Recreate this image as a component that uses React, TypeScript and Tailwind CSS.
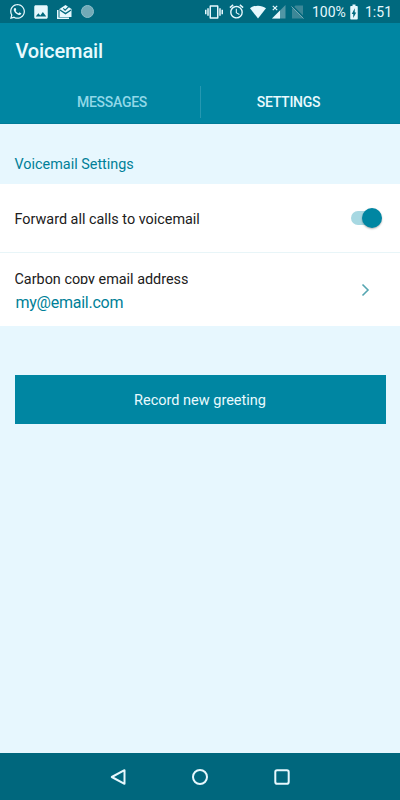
import React from 'react';
import { FaWhatsapp } from 'react-icons/fa';
import { MdAlarm, MdBatteryChargingFull, MdImage, MdVibration } from 'react-icons/md';

const StatusBar = () => (
    <div className="flex h-[23px] shrink-0 items-center bg-[#00697e] text-[#e6f8fd]">
        <FaWhatsapp className="ml-[9px] size-[17px]" />
        <MdImage className="ml-[6px] size-[18px]" />
        {/* Inbox with a checked letter */}
        <svg className="ml-[7px] h-[14px] w-[15px]" viewBox="0 0 15 14">
            <path d="M0 5h1.5v7.5H12V14H0z" fill="currentColor" />
            <path d="M2.5 4 8.5 0l6 4v8h-12z" fill="currentColor" />
            <path d="m3 5 5.5 3.6L14 5" fill="none" stroke="#00697e" strokeWidth="1.3" />
            <path d="m6.3 3.4 1.8 1.8L12 1.4" fill="none" stroke="#00697e" strokeWidth="1.2" />
        </svg>
        <div className="ml-[9px] size-[13px] rounded-full border border-[#8dbfca] bg-[#72aab7]" />

        <MdVibration className="ml-auto size-[18px]" />
        <MdAlarm className="ml-[5px] size-[17px]" />
        <svg className="ml-[4px] h-[14px] w-[18px]" viewBox="0 0 18 14" fill="currentColor">
            <path d="M1 3.2C5.5 -.2 12.5 -.2 17 3.2L9 13.5z" />
        </svg>
        <svg className="ml-[5px] h-[14px] w-[14px]" viewBox="0 0 14 14">
            <path d="M13.5 0v13.5H0z" fill="#5196a5" />
            <path d="M8 5.5v8H0z" fill="currentColor" />
            <path d="M0 0h6.5v6H0z" fill="#00697e" />
            <path d="m.8 .8 4.4 4.4m0-4.4L.8 5.2" stroke="currentColor" strokeWidth="1.2" />
        </svg>
        {/* Empty SIM slot */}
        <svg className="ml-[5px] h-[14px] w-[13px]" viewBox="0 0 13 14">
            <path d="M4.5.5H12v13H1V4z" fill="#3b8797" />
            <path d="m1.5 1 12 12" stroke="#00697e" strokeWidth="1.4" />
            <path d="m.5 1.5 12 12" stroke="#74aab6" />
        </svg>
        <span className="ml-[8px] w-[34px] whitespace-nowrap pt-px text-[14px] leading-none">100%</span>
        <MdBatteryChargingFull className="ml-[-1px] mr-[-1px] size-[18px]" />
        <span className="ml-[3px] w-[35px] pt-px text-[14px] leading-none">1:51</span>
    </div>
);

const Header = () => (
    <header className="h-[101px] shrink-0 border-b border-[#007c97] bg-[#0086a2]">
        <h1 className="ml-[15.5px] h-[56px] text-[20px] font-medium leading-[56px] tracking-[-0.1px] text-[#e9fafe]">Voicemail</h1>
        <div className="flex items-center pt-[6px] text-center text-[14px] font-medium tracking-[-0.25px]">
            <div className="w-[200px] pl-[24px] pt-px leading-[32px] text-[#91d8e8]">MESSAGES</div>
            <div className="h-[32px] w-px bg-[#2598b1]" />
            <div className="w-[199px] pr-[24px] pt-px leading-[32px] text-[#e9fafe]">SETTINGS</div>
        </div>
    </header>
);

const Toggle = () => (
    <div className="flex h-5 w-[31px] items-center justify-end">
        <div className="mr-[-17px] h-[14px] w-[28px] rounded-full bg-[#a7d8e2]" />
        <div className="z-10 size-5 rounded-full bg-[#0086a2] shadow-[0_1px_2px_rgba(0,0,0,0.3)]" />
    </div>
);

const NavigationBar = () => (
    <nav className="flex h-[47px] shrink-0 items-center justify-center gap-[64px] bg-[#00677d] text-[#e6f8fd]">
        <svg className="size-[18px]" viewBox="0 0 18 18" fill="none" stroke="currentColor" strokeWidth="2" strokeLinejoin="round">
            <path d="M15.5 2.2v13.6L2.8 9z" />
        </svg>
        <svg className="size-[18px]" viewBox="0 0 18 18" fill="none" stroke="currentColor" strokeWidth="2">
            <circle cx="9" cy="9" r="7" />
        </svg>
        <svg className="size-[18px]" viewBox="0 0 18 18" fill="none" stroke="currentColor" strokeWidth="2">
            <rect x="2.3" y="2.3" width="13.4" height="13.4" rx="1.8" />
        </svg>
    </nav>
);

const App = () => {
    return (
        <div className="flex h-[800px] w-[400px] flex-col overflow-hidden bg-[#e7f7fe] font-['Roboto',sans-serif]">
            <StatusBar />
            <Header />
            <main className="flex-1">
                <h2 className="h-[60px] pl-[14.5px] pt-[31px] text-[14.4px] leading-[20px] text-[#007f98]">Voicemail Settings</h2>
                <div className="flex h-[69px] items-center justify-between border-b border-[#e8f5f8] bg-white pl-[14.5px] pr-[18px]">
                    <span className="pt-[3px] text-[14.4px] text-[#202020]">Forward all calls to voicemail</span>
                    <Toggle />
                </div>
                <div className="flex h-[73px] items-center justify-between bg-white pl-[14.5px] pr-[30px]">
                    <div className="pt-[3px]">
                        {/* The label's fixed height cuts off its descenders */}
                        <div className="h-[14px] overflow-hidden text-[14.4px] leading-[20px] text-[#202020]">Carbon copy email address</div>
                        <div className="pl-px pt-[9px] text-[16px] leading-[20px] tracking-[-0.25px] text-[#007f98]">my@email.com</div>
                    </div>
                    <svg className="h-[14px] w-[9px]" viewBox="0 0 9 14" fill="none" stroke="#55a6b1" strokeWidth="1.6">
                        <path d="m1.5 1.5 5.5 5.5-5.5 5.5" />
                    </svg>
                </div>
                <button className="ml-[14.5px] mt-[49px] block h-[49px] w-[371px] bg-[#0086a2] pt-[2px] text-[14.5px] text-[#e9fafe]">
                    Record new greeting
                </button>
            </main>
            <NavigationBar />
        </div>
    );
};

export default App;
